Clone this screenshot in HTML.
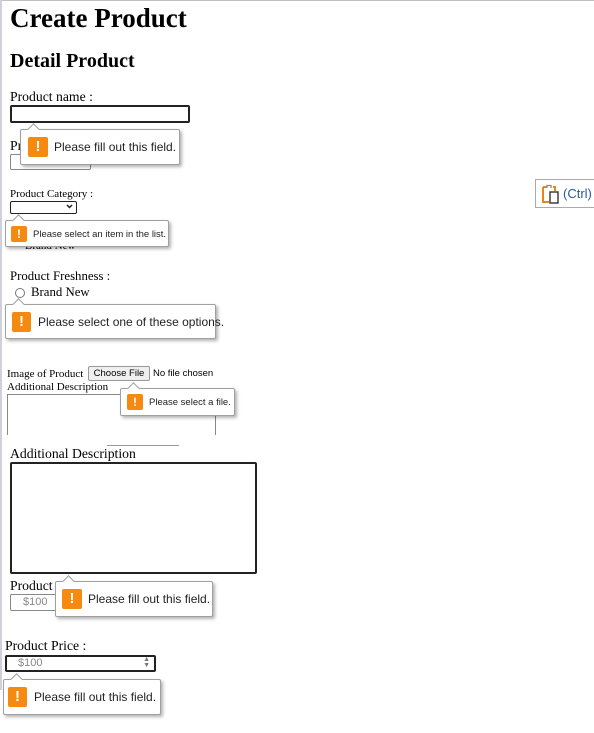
<!DOCTYPE html>
<html><head><meta charset="utf-8"><style>
*{margin:0;padding:0;box-sizing:border-box}
body{width:594px;height:733px;background:#fff;position:relative;overflow:hidden;font-family:"Liberation Serif",serif;color:#000}
.a{position:absolute;white-space:nowrap}
.s{font-family:"Liberation Sans",sans-serif}
.tip{position:absolute;background:#fff;border:1px solid #a0a0a0;border-radius:2px;box-shadow:2px 2px 3px rgba(0,0,0,.3);font-family:"Liberation Sans",sans-serif;color:#222;white-space:nowrap}
.tip:before{content:"";position:absolute;left:8px;top:-5px;width:8px;height:8px;background:#fff;border-left:1px solid #a0a0a0;border-top:1px solid #a0a0a0;transform:rotate(45deg)}
.ic{position:absolute;background:#f68a10;color:#fff;font-weight:bold;text-align:center;border-radius:2px;font-family:"Liberation Sans",sans-serif}
.inp{position:absolute;border:2px solid #222;border-radius:2px;background:#fff}
.inp2{position:absolute;border:1px solid #888;border-radius:2px;background:#fff}
</style></head><body>
<div class="a" style="left:0;top:0;width:594px;height:1px;background:#c0c0c0"></div>
<div class="a" style="left:0;top:0;width:2px;height:690px;background:#d0d0d8"></div>

<div class="a" style="left:10px;top:2px;font-size:27px;font-weight:bold;line-height:32px">Create Product</div>
<div class="a" style="left:10px;top:48px;font-size:20px;font-weight:bold;line-height:26px">Detail Product</div>

<div class="a" style="left:10px;top:89px;font-size:13.7px">Product name :</div>
<div class="inp" style="left:10px;top:105px;width:180px;height:18px"></div>
<div class="a" style="left:10px;top:138px;font-size:13.7px">Pr</div>
<div class="inp2" style="left:10px;top:154px;width:81px;height:16px"></div>
<div class="tip" style="left:20px;top:129px;width:160px;height:36px;font-size:12px"><div class="ic" style="left:7px;top:7px;width:20px;height:20px;line-height:20px;font-size:15px">!</div><span style="position:absolute;left:33px;top:10px">Please fill out this field.</span></div>

<div class="a" style="left:10px;top:188px;font-size:11px">Product Category :</div>
<div class="inp" style="left:10px;top:201px;width:67px;height:13px;border-width:1.5px"><svg style="position:absolute;right:3px;top:2px" width="7" height="5" viewBox="0 0 7 5"><path d="M1 1l2.5 2.5L6 1" fill="none" stroke="#222" stroke-width="1.5"/></svg></div>
<div class="a" style="left:25px;top:240px;font-size:11px">Brand New</div>
<div class="tip" style="left:5px;top:220px;width:164px;height:27px;font-size:9.5px"><div class="ic" style="left:5px;top:5px;width:16px;height:16px;line-height:16px;font-size:12px">!</div><span style="position:absolute;left:27px;top:8px">Please select an item in the list.</span></div>

<div class="a" style="left:10px;top:269px;font-size:12.8px">Product Freshness :</div>
<div class="a" style="left:15px;top:288px;width:10px;height:10px;border:1px solid #777;border-radius:50%"></div>
<div class="a" style="left:31px;top:285px;font-size:12.8px">Brand New</div>
<div class="tip" style="left:5px;top:304px;width:211px;height:35px;font-size:12px"><div class="ic" style="left:6px;top:7px;width:19px;height:20px;line-height:20px;font-size:15px">!</div><span style="position:absolute;left:32px;top:10px">Please select one of these options.</span></div>

<div class="a" style="left:7px;top:368px;font-size:11px">Image of Product</div>
<div class="a s" style="left:88px;top:366px;width:62px;height:15px;border:1px solid #999;border-radius:2px;background:#efefef;font-size:9.5px;line-height:13px;text-align:center">Choose File</div>
<div class="a s" style="left:153px;top:368px;font-size:9.5px">No file chosen</div>
<div class="a" style="left:7px;top:381px;font-size:11px">Additional Description</div>
<div class="a" style="left:7px;top:394px;width:209px;height:41px;border:1px solid #888;border-bottom:none"></div>
<div class="tip" style="left:120px;top:388px;width:115px;height:28px;font-size:9.5px"><div class="ic" style="left:6px;top:5px;width:16px;height:16px;line-height:16px;font-size:12px">!</div><span style="position:absolute;left:28px;top:8px">Please select a file.</span></div>
<div class="a" style="left:107px;top:445px;width:72px;height:1px;background:#999"></div>

<div class="a" style="left:10px;top:446px;font-size:13.7px">Additional Description</div>
<div class="inp" style="left:10px;top:462px;width:247px;height:112px"></div>

<div class="a" style="left:10px;top:578px;font-size:13.7px">Product</div>
<div class="inp2 s" style="left:10px;top:594px;width:52px;height:17px;font-size:11px;color:#888;padding-left:12px;line-height:15px">$100</div>
<div class="tip" style="left:55px;top:581px;width:158px;height:36px;font-size:12px"><div class="ic" style="left:6px;top:7px;width:20px;height:20px;line-height:20px;font-size:15px">!</div><span style="position:absolute;left:32px;top:10px">Please fill out this field.</span></div>

<div class="a" style="left:5px;top:638px;font-size:13.7px">Product Price :</div>
<div class="inp s" style="left:5px;top:655px;width:151px;height:17px;font-size:11px;color:#888;padding-left:11px;line-height:13px">$100<span style="position:absolute;right:4px;top:0;font-size:7px;line-height:6px;color:#777">▲<br>▼</span></div>
<div class="tip" style="left:3px;top:679px;width:158px;height:36px;font-size:12px"><div class="ic" style="left:4px;top:7px;width:19px;height:20px;line-height:20px;font-size:15px">!</div><span style="position:absolute;left:30px;top:10px">Please fill out this field.</span></div>

<div class="a" style="left:535px;top:179px;width:62px;height:29px;border:1px solid #aaa;background:#fff">
<svg style="position:absolute;left:5px;top:4px" width="20" height="20" viewBox="0 0 20 20"><path d="M2 3h4M12 3h2v4M2 3v15h6" fill="none" stroke="#e8861a" stroke-width="2"/><path d="M6 4V1.5h4V4" fill="none" stroke="#888" stroke-width="1.3"/><rect x="9" y="8" width="8" height="11" fill="#fff" stroke="#333" stroke-width="1.4"/></svg>
<span class="s" style="position:absolute;left:27px;top:6px;font-size:13px;color:#2b5aa0">(Ctrl)</span></div>
</body></html>
